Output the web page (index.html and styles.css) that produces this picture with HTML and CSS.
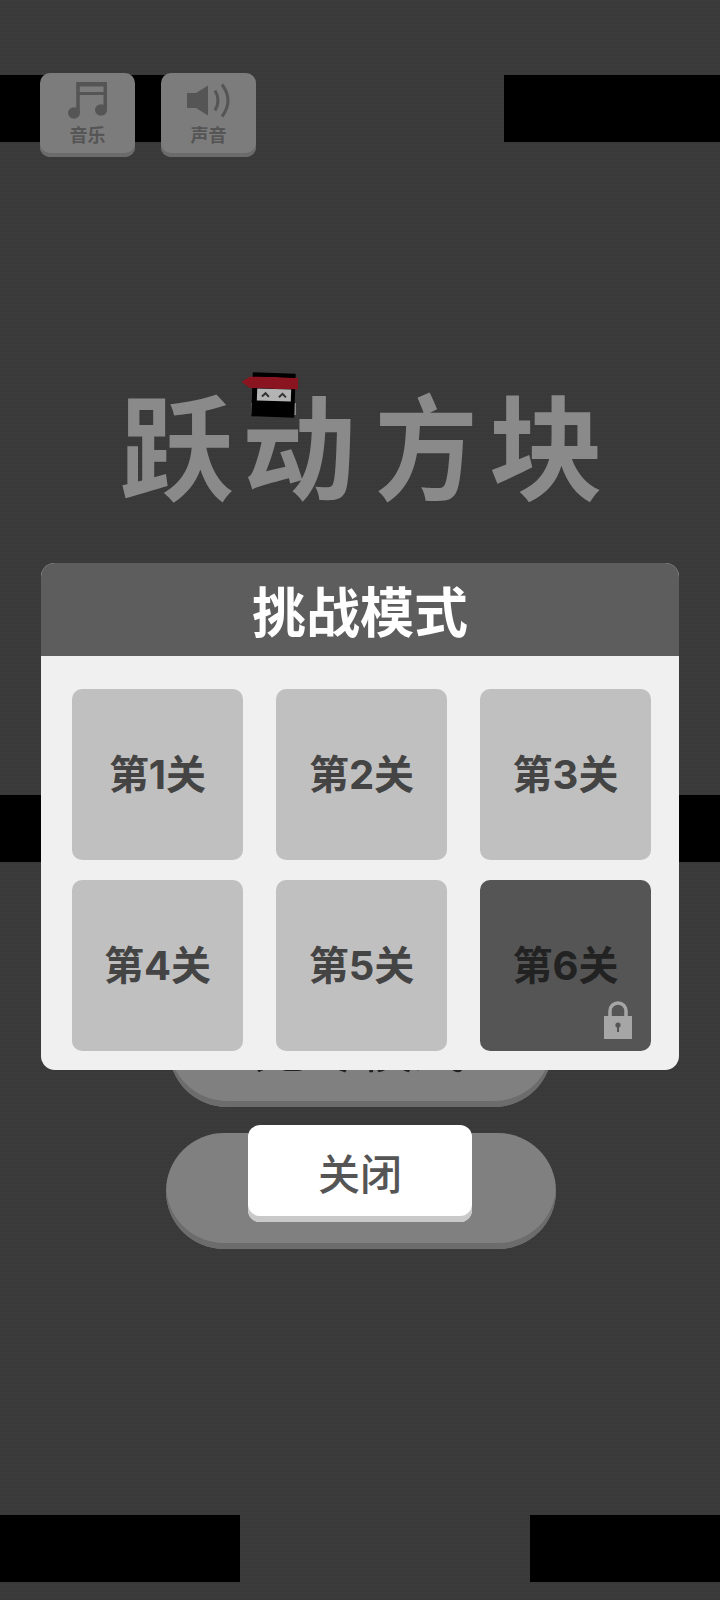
FILE: index.html
```html
<!DOCTYPE html>
<html lang="zh">
<head>
  <meta charset="UTF-8" />
  <title>跃动方块</title>
  <link rel="stylesheet" href="styles.css">
</head>
<body>
  <div class="bar bar-top-left"></div>
  <div class="bar bar-top-right"></div>
  <div class="bar bar-mid"></div>
  <div class="bar bar-low-left"></div>
  <div class="bar bar-low-right"></div>

  <div class="top-btns">
    <div class="sq-btn">
      <svg width="39" height="37" viewBox="0 0 39 37">
        <path d="M10 31V1.500H37.300V28" fill="none" stroke="#555" stroke-width="3.600"/>
        <rect x="10" y="0" width="29" height="4.500" fill="#555"/>
        <rect x="10" y="10" width="29" height="3" fill="#555"/>
        <ellipse cx="6" cy="31" rx="6" ry="5.800" fill="#555"/>
        <ellipse cx="33" cy="28" rx="6" ry="5.800" fill="#555"/>
      </svg>
      <span>音乐</span>
    </div>
    <div class="sq-btn">
      <svg width="44" height="37" viewBox="0 0 44 37">
        <path d="M0 11h9L21 3.500v30L9 26H0z" fill="#555"/>
        <path d="M28 8.500q6 10 0 20" fill="none" stroke="#555" stroke-width="3"/>
        <path d="M35 2.500q12 16 0 32" fill="none" stroke="#555" stroke-width="3"/>
      </svg>
      <span>声音</span>
    </div>
  </div>

  <div class="logo">
    <div class="ninja">
      <div class="band"></div>
      <div class="eyes">
        <svg width="34" height="12" viewBox="0 0 34 12">
          <path d="M5 8l3.500-3.500L12 8M22 8l3.500-3.500L29 8" fill="none" stroke="#333" stroke-width="2"/>
        </svg>
      </div>
    </div>
    <h1><span>跃</span><span>动</span><span class="narrow">方</span><span class="nudge">块</span></h1>
  </div>

  <div class="pills">
    <div class="pill"><span>无尽模式</span></div>
    <div class="pill pill-close">
      <button class="close-btn">关闭</button>
    </div>
  </div>

  <!-- 挑战模式弹窗 -->
  <div class="modal">
    <div class="modal-head">挑战模式</div>
    <div class="levels">
      <div class="level">第1关</div>
      <div class="level">第2关</div>
      <div class="level">第3关</div>
      <div class="level">第4关</div>
      <div class="level">第5关</div>
      <div class="level locked">第6关
        <svg class="lock" width="30" height="38" viewBox="0 0 30 38">
          <path d="M7 16V10a8 8 0 0 1 16 0v6" fill="none" stroke="#a6a6a6" stroke-width="3.500"/>
          <rect x="1" y="15" width="28" height="23" fill="#a6a6a6"/>
          <circle cx="15" cy="24" r="2.600" fill="#555"/>
          <rect x="14" y="24" width="2" height="7" fill="#555"/>
        </svg>
      </div>
    </div>
  </div>
</body>
</html>
```

FILE: styles.css
```css
* {
  box-sizing: border-box;
  margin: 0;
  padding: 0;
}

body {
  position: relative;
  width: 720px;
  height: 1600px;
  overflow: hidden;
  background: repeating-linear-gradient(#3b3b3b 0 2px, #393939 2px 4px);
  font-family: "Noto Sans CJK SC", "Noto Sans", sans-serif;
}

.bar {
  position: absolute;
  height: 67px;
  background-color: #000;
}

.bar-top-left { left: 0; top: 75px; width: 170px; }
.bar-top-right { left: 504px; top: 75px; width: 216px; }
.bar-mid { left: 0; top: 795px; width: 720px; }
.bar-low-left { left: 0; top: 1515px; width: 240px; }
.bar-low-right { left: 530px; top: 1515px; width: 190px; }

.top-btns {
  position: relative;
  display: flex;
  gap: 26px;
  padding: 73px 0 0 40px;
}

.sq-btn {
  width: 95px;
  height: 84px;
  padding-top: 9px;
  display: flex;
  flex-direction: column;
  align-items: center;
  background-color: #7c7c7c;
  border-radius: 10px;
  box-shadow: inset 0 -4px 0 #6b6b6b;
}

.sq-btn svg {
  display: block;
}

.sq-btn span {
  margin-top: 3px;
  font-size: 18px;
  line-height: 24px;
  font-weight: 700;
  color: #555;
}

.logo {
  position: relative;
  margin-top: 215px;
  height: 128px;
}

.ninja {
  position: absolute;
  left: 252px;
  top: 1px;
  width: 43px;
  height: 44px;
  background-color: #000;
  transform: rotate(2deg);
  z-index: 1;
}

.band {
  position: absolute;
  left: -11px;
  top: 4px;
  width: 57px;
  height: 12px;
  background-color: #8a1420;
  clip-path: polygon(0 50%, 16% 0, 100% 0, 100% 100%, 16% 100%);
}

.eyes {
  position: absolute;
  left: 5px;
  top: 16px;
  width: 34px;
  height: 12px;
  background-color: #b4b4b4;
}

.eyes svg {
  display: block;
}

h1 {
  position: absolute;
  left: 120px;
  top: 8px;
  width: 480px;
  display: flex;
  justify-content: space-between;
  font-size: 114px;
  line-height: 124px;
  font-weight: 700;
  color: #8a8a8a;
}

h1 .narrow {
  transform: translateX(5px) scaleX(0.9);
}

h1 .nudge {
  transform: translateX(3px);
}

.pills {
  position: relative;
  margin-top: 491px;
  display: flex;
  flex-direction: column;
  align-items: center;
  gap: 26px;
}

.pill {
  width: 383px;
  height: 116px;
  padding-top: 26px;
  display: flex;
  justify-content: center;
  background-color: #808080;
  border-radius: 58px;
  box-shadow: inset 0 -6px 0 #6c6c6c;
  font-size: 53px;
  line-height: 56px;
  color: #222;
}

.pill-close {
  position: relative;
  width: 390px;
  margin-left: 2px;
  padding-top: 0;
}

.close-btn {
  position: absolute;
  left: 82px;
  top: -8px;
  width: 224px;
  height: 97px;
  padding-bottom: 5px;
  border: none;
  border-radius: 12px;
  background-color: #fff;
  box-shadow: inset 0 -6px 0 #c9c9c9;
  font-family: inherit;
  font-size: 42px;
  font-weight: 500;
  color: #555;
}

.modal {
  position: absolute;
  left: 41px;
  top: 563px;
  width: 638px;
  height: 507px;
  background-color: #f0f0f0;
  border-radius: 14px;
  overflow: hidden;
}

.modal-head {
  height: 93px;
  background-color: #5e5d5e;
  text-align: center;
  font-size: 54px;
  line-height: 93px;
  font-weight: 700;
  color: #fff;
}

.levels {
  display: grid;
  grid-template-columns: repeat(3, 171px);
  grid-template-rows: repeat(2, 171px);
  column-gap: 33px;
  row-gap: 20px;
  padding: 33px 0 0 31px;
}

.level {
  position: relative;
  display: flex;
  align-items: center;
  justify-content: center;
  background-color: #c0c0c0;
  border-radius: 10px;
  font-family: Inter, "Noto Sans CJK SC", sans-serif;
  font-size: 40px;
  font-weight: 700;
  line-height: 48px;
  color: #444;
}

.level.locked {
  background-color: #555;
  color: #222;
}

.lock {
  position: absolute;
  right: 18px;
  bottom: 12px;
}
```
